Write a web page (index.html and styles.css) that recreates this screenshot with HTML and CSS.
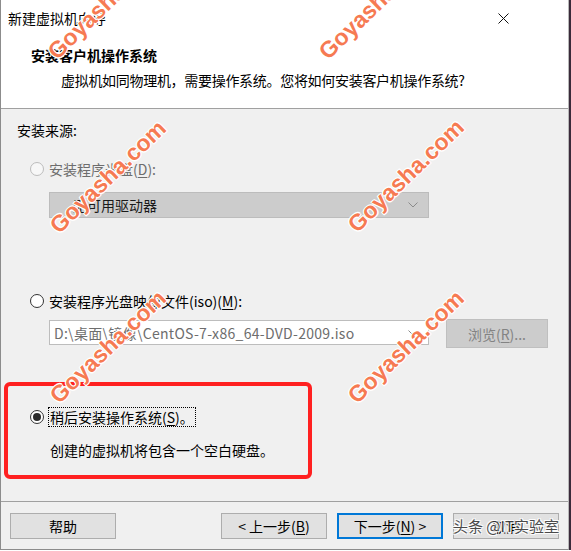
FILE: index.html
```html
<!DOCTYPE html>
<html lang="zh-CN">
<head>
<meta charset="utf-8">
<title>新建虚拟机向导</title>
<link rel="stylesheet" href="styles.css">
</head>
<body>
<div class="screen">
  <div class="dialog">
    <div class="header">
      <div class="titlebar">
        <span class="title">新建虚拟机向导</span>
        <svg class="close" width="11" height="11" viewBox="0 0 11 11"><path d="M0.5 0.5 L10.5 10.5 M10.5 0.5 L0.5 10.5" stroke="#111" stroke-width="1" fill="none"/></svg>
      </div>
      <div class="hd-title">安装客户机操作系统</div>
      <div class="hd-sub">虚拟机如同物理机，需要操作系统。您将如何安装客户机操作系统?</div>
    </div>
    <div class="content">
      <div class="src-label">安装来源:</div>
      <div class="radio-row row-disc">
        <span class="radio disabled"></span>
        <span class="label disabled-text">安装程序光盘(<u>D</u>):</span>
      </div>
      <div class="combo">
        <span class="combo-text">无可用驱动器</span>
        <svg class="chev" width="10" height="6" viewBox="0 0 10 6"><path d="M0.5 0.5 L5 5 L9.5 0.5" stroke="#8a8a8a" fill="none"/></svg>
      </div>
      <div class="radio-row row-iso">
        <span class="radio"></span>
        <span class="label">安装程序光盘映像文件(iso)(<u>M</u>):</span>
      </div>
      <div class="file-row">
        <div class="file-input">
          <span class="file-text">D:\桌面\镜像\CentOS-7-x86_64-DVD-2009.iso</span>
          <svg class="chev" width="10" height="6" viewBox="0 0 10 6"><path d="M0.5 0.5 L5 5 L9.5 0.5" stroke="#8a8a8a" fill="none"/></svg>
        </div>
        <div class="browse">浏览(<u>R</u>)...</div>
      </div>
      <div class="radio-row row-later">
        <span class="radio checked"></span>
        <span class="label focus">稍后安装操作系统(<u>S</u>)。</span>
      </div>
      <div class="desc">创建的虚拟机将包含一个空白硬盘。</div>
    </div>
    <div class="footer">
      <div class="btn">帮助</div>
      <div class="btn back">&lt; 上一步(<u>B</u>)</div>
      <div class="btn primary">下一步(<u>N</u>) &gt;</div>
      <div class="btn">取消</div>
    </div>
  </div>
  <div class="edge"></div>
</div>

<div class="highlight"></div>

<div class="wm wm1">Goyasha.com</div>
<div class="wm wm2">Goyasha.com</div>
<div class="wm wm3">Goyasha.com</div>
<div class="wm wm4">Goyasha.com</div>
<div class="wm wm5">Goyasha.com</div>
<div class="wm wm6">Goyasha.com</div>

<div class="tt-mark">头条 @IT实验室</div>
</body>
</html>
```
FILE: styles.css
```css
* { box-sizing: border-box; }
html, body { margin: 0; padding: 0; }
body {
  width: 571px;
  height: 551px;
  overflow: hidden;
  position: relative;
  background: #fff;
  font-family: "Noto Sans CJK SC", "Noto Sans", sans-serif;
  font-size: 14px;
  color: #000;
}
u { text-decoration: underline; text-underline-offset: 2px; }

.screen { display: flex; height: 550px; }
.dialog {
  width: 569px;
  height: 550px;
  border-left: 1px solid #8c8c8c;
  border-right: 1px solid #b8b8b8;
  border-bottom: 1px solid #8c8c8c;
  background: #f0f0f0;
  display: flex;
  flex-direction: column;
}
.edge { flex: 1; background: #3a2a3a; }

.header {
  background: #fff;
  height: 109px;
  border-bottom: 1px solid #a0a0a0;
  flex: none;
}
.titlebar {
  height: 36px;
  display: flex;
  align-items: center;
  padding-left: 7px;
}
.title { line-height: 20px; }
.close { margin-left: auto; margin-right: 59px; }
.hd-title {
  margin-top: 9px;
  padding-left: 30px;
  line-height: 20px;
  font-weight: bold;
}
.hd-sub {
  margin-top: 5px;
  padding-left: 60px;
  line-height: 20px;
  letter-spacing: -0.3px;
}

.content {
  flex: 1;
  padding: 11px 0 0 16px;
  display: flex;
  flex-direction: column;
  align-items: flex-start;
}
.src-label { line-height: 20px; }

.radio-row {
  display: flex;
  align-items: center;
  height: 20px;
  margin-left: 13px;
  gap: 5px;
}
.row-disc { margin-top: 19px; }
.row-iso { margin-top: 73px; }
.row-later { margin-top: 59px; gap: 4px; }

.radio {
  width: 14px;
  height: 14px;
  border: 1px solid #333;
  border-radius: 50%;
  background: #fff;
  display: flex;
  align-items: center;
  justify-content: center;
  flex: none;
}
.radio.disabled { border-color: #bcbcbc; background: #f7f7f7; }
.radio.checked::after {
  content: "";
  width: 8px;
  height: 8px;
  border-radius: 50%;
  background: #2b2b2b;
}
.label { line-height: 20px; white-space: nowrap; }
.disabled-text { color: #6d6d6d; }
.label.focus {
  border: 1px dotted #000;
  padding: 0 1px;
  line-height: 18px;
  height: 20px;
}

.combo {
  margin-top: 13px;
  margin-left: 32px;
  width: 380px;
  height: 26px;
  background: #cccccc;
  border: 1px solid #bcbcbc;
  display: flex;
  align-items: center;
  padding-left: 23px;
  padding-right: 10px;
}
.combo-text { color: #1a1a1a; line-height: 20px; }
.chev { margin-left: auto; flex: none; }

.file-row {
  margin-top: 8px;
  margin-left: 32px;
  display: flex;
  align-items: flex-start;
  gap: 17px;
}
.file-input {
  margin-top: 1px;
  width: 380px;
  height: 25px;
  background: #fff;
  border: 1px solid #bdbdbd;
  display: flex;
  align-items: center;
  padding-left: 4px;
  padding-right: 10px;
}
.file-text {
  color: #6d6d6d;
  line-height: 20px;
  white-space: nowrap;
  letter-spacing: 0.3px;
}
.browse {
  width: 102px;
  height: 29px;
  background: #cccccc;
  border: 1px solid #bfbfbf;
  color: #838383;
  display: flex;
  align-items: center;
  justify-content: center;
}

.desc {
  margin-top: 13px;
  padding-left: 33px;
  line-height: 20px;
}

.footer {
  flex: none;
  height: 48px;
  border-top: 1px solid #a0a0a0;
  padding: 11px 9px 0 9px;
  display: flex;
  align-items: flex-start;
  gap: 10px;
}
.btn {
  width: 106px;
  height: 26px;
  background: #e1e1e1;
  border: 1px solid #adadad;
  display: flex;
  align-items: center;
  justify-content: center;
  white-space: nowrap;
}
.btn.back { margin-left: auto; }
.btn.primary { border: 2px solid #0078d7; }

.highlight {
  position: absolute;
  left: 4px;
  top: 382px;
  width: 308px;
  height: 97px;
  border: 4px solid #ff2020;
  border-radius: 6px;
}

.wm {
  position: absolute;
  font-family: "Liberation Sans", Arial, sans-serif;
  font-weight: bold;
  font-size: 23px;
  color: #f67a52;
  white-space: nowrap;
  transform: translate(-50%, -50%) rotate(-44deg);
  text-shadow: 1px 1px 0 #fff, -1px -1px 0 #fff, 1px -1px 0 #fff, -1px 1px 0 #fff;
  line-height: 1;
}
.wm1 { left: 106px; top: 3px; }
.wm2 { left: 377px; top: 3px; }
.wm3 { left: 108px; top: 177px; }
.wm4 { left: 406px; top: 176px; }
.wm5 { left: 108px; top: 347px; }
.wm6 { left: 406px; top: 347px; }

.tt-mark {
  position: absolute;
  left: 453px;
  top: 516px;
  font-size: 15px;
  line-height: 20px;
  color: #3a3a3a;
  white-space: nowrap;
  text-shadow: 1px 1px 0 #fff, -1px -1px 0 #fff, 1px -1px 0 #fff, -1px 1px 0 #fff;
  opacity: 0.9;
}
```
